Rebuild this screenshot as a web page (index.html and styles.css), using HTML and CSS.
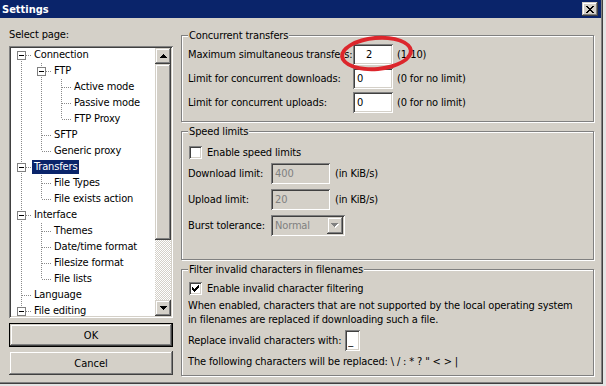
FILE: index.html
```html
<!DOCTYPE html>
<html lang="en">
  <head>
    <meta charset="UTF-8" />
    <meta name="viewport" content="width=device-width, initial-scale=1.0" />
    <title>Settings</title>
    <link rel="stylesheet" href="styles.css">
  </head>
  <body>
    <div class="window">
      <!-- Title bar -->
      <div class="titlebar">
        <span class="title">Settings</span>
        <button class="close raised" type="button" aria-label="Close">
          <svg width="8" height="7" viewBox="0 0 8 7"><path d="M0 0h2v1h1v1h2V1h1V0h2v1H7v1H6v1H5v1h1v1h1v1h1v1H6V6H5V5H3v1H2v1H0V6h1V5h1V4h1V3H2V2H1V1H0z" fill="#000"/></svg>
        </button>
      </div>

      <div class="content">
        <!-- Page list -->
        <div class="sidebar">
          <div class="caption">Select page:</div>
          <div class="tree sunken">
            <div class="tree-list">
              <div class="node"><span class="cell root-first"><span class="expander"></span></span><span class="label">Connection</span></div>
              <div class="node"><span class="cell pipe"></span><span class="cell tee"><span class="expander"></span></span><span class="label">FTP</span></div>
              <div class="node"><span class="cell pipe"></span><span class="cell pipe"></span><span class="cell tee"></span><span class="label">Active mode</span></div>
              <div class="node"><span class="cell pipe"></span><span class="cell pipe"></span><span class="cell tee"></span><span class="label">Passive mode</span></div>
              <div class="node"><span class="cell pipe"></span><span class="cell pipe"></span><span class="cell elbow"></span><span class="label">FTP Proxy</span></div>
              <div class="node"><span class="cell pipe"></span><span class="cell tee"></span><span class="label">SFTP</span></div>
              <div class="node"><span class="cell pipe"></span><span class="cell elbow"></span><span class="label">Generic proxy</span></div>
              <div class="node"><span class="cell tee"><span class="expander"></span></span><span class="label selected">Transfers</span></div>
              <div class="node"><span class="cell pipe"></span><span class="cell tee"></span><span class="label">File Types</span></div>
              <div class="node"><span class="cell pipe"></span><span class="cell elbow"></span><span class="label">File exists action</span></div>
              <div class="node"><span class="cell tee"><span class="expander"></span></span><span class="label">Interface</span></div>
              <div class="node"><span class="cell pipe"></span><span class="cell tee"></span><span class="label">Themes</span></div>
              <div class="node"><span class="cell pipe"></span><span class="cell tee"></span><span class="label">Date/time format</span></div>
              <div class="node"><span class="cell pipe"></span><span class="cell tee"></span><span class="label">Filesize format</span></div>
              <div class="node"><span class="cell pipe"></span><span class="cell elbow"></span><span class="label">File lists</span></div>
              <div class="node"><span class="cell tee"></span><span class="label">Language</span></div>
              <div class="node"><span class="cell tee"><span class="expander"></span></span><span class="label">File editing</span></div>
            </div>
            <div class="scrollbar">
              <div class="sb-btn raised">
                <svg width="7" height="4" viewBox="0 0 7 4"><path d="M3 0h1v1H3zM2 1h3v1H2zM1 2h5v1H1zM0 3h7v1H0z" fill="#000"/></svg>
              </div>
              <div class="sb-thumb raised"></div>
              <div class="sb-track"></div>
              <div class="sb-btn raised">
                <svg width="7" height="4" viewBox="0 0 7 4"><path d="M0 0h7v1H0zM1 1h5v1H1zM2 2h3v1H2zM3 3h1v1H3z" fill="#000"/></svg>
              </div>
            </div>
          </div>
          <button class="btn btn-default" type="button"><span class="raised">OK</span></button>
          <button class="btn raised" type="button">Cancel</button>
        </div>

        <!-- Transfers page -->
        <div class="pages">
          <fieldset class="group group-concurrent">
            <legend>Concurrent transfers</legend>
            <div class="form-grid">
              <span>Maximum simultaneous transfers:</span>
              <span class="marked">
                <input class="field sunken" type="text" value="2">
                <span class="ring"></span>
              </span>
              <span>(1-10)</span>

              <span>Limit for concurrent downloads:</span>
              <input class="field sunken" type="text" value="0">
              <span>(0 for no limit)</span>

              <span>Limit for concurrent uploads:</span>
              <input class="field sunken" type="text" value="0">
              <span>(0 for no limit)</span>
            </div>
          </fieldset>

          <fieldset class="group group-speed">
            <legend>Speed limits</legend>
            <label class="check-row">
              <span class="check sunken"></span>
              Enable speed limits
            </label>
            <div class="form-grid speed-grid">
              <span>Download limit:</span>
              <input class="field sunken" type="text" value="400" disabled>
              <span>(in KiB/s)</span>

              <span>Upload limit:</span>
              <input class="field sunken" type="text" value="20" disabled>
              <span>(in KiB/s)</span>

              <span>Burst tolerance:</span>
              <div class="combo sunken">
                <span class="combo-value">Normal</span>
                <span class="combo-btn raised">
                  <svg width="8" height="5" viewBox="0 0 8 5"><path d="M1 1h7v1H1zM2 2h5v1H2zM3 3h3v1H3zM4 4h1v1H4z" fill="#fff"/><path d="M0 0h7v1H0zM1 1h5v1H1zM2 2h3v1H2zM3 3h1v1H3z" fill="#808080"/></svg>
                </span>
              </div>
              <span></span>
            </div>
          </fieldset>

          <fieldset class="group group-filter">
            <legend>Filter invalid characters in filenames</legend>
            <label class="check-row">
              <span class="check sunken">
                <svg width="7" height="7" viewBox="0 0 7 7"><path d="M6 0h1v1H6zM5 1h2v1H5zM0 2h1v1H0zM4 2h3v1H4zM0 3h2v1H0zM3 3h3v1H3zM0 4h5v1H0zM1 5h3v1H1zM2 6h1v1H2z" fill="#000"/></svg>
              </span>
              Enable invalid character filtering
            </label>
            <p class="note">When enabled, characters that are not supported by the local operating system<br>in filenames are replaced if downloading such a file.</p>
            <div class="replace-row">
              <span>Replace invalid characters with:</span>
              <input class="field field-char sunken" type="text" value="_">
            </div>
            <p class="replaced">The following characters will be replaced: \ / : * ? " &lt; &gt; |</p>
          </fieldset>
        </div>
      </div>
    </div>
  </body>
</html>
```

FILE: styles.css
```css
:root {
  --face: #d4d0c8;
  --shadow: #808080;
  --dark: #404040;
  --light: #ffffff;
  --title: #0a246a;
  --dots-v: repeating-linear-gradient(to bottom, #8a8a8a 0 1px, transparent 1px 2px);
  --dots-h: repeating-linear-gradient(to right, #8a8a8a 0 1px, transparent 1px 2px);
}

* {
  margin: 0;
  padding: 0;
  box-sizing: border-box;
}

body {
  background-color: #e4e4e4;
  color: #000;
  font-family: "DejaVu Sans Condensed", "DejaVu Sans", sans-serif;
  font-size: 11px;
  letter-spacing: -0.15px;
}

/* 3D edges */
.raised {
  background-color: var(--face);
  box-shadow: inset -1px -1px 0 var(--dark), inset 1px 1px 0 var(--face),
    inset -2px -2px 0 var(--shadow), inset 2px 2px 0 var(--light);
}

.sunken {
  box-shadow: inset 1px 1px 0 var(--shadow), inset -1px -1px 0 var(--light),
    inset 2px 2px 0 var(--dark), inset -2px -2px 0 var(--face);
}

.window {
  width: 603px;
  height: 384px;
  display: flex;
  flex-direction: column;
  background-color: var(--face);
  box-shadow: inset -1px -1px 0 var(--dark), inset -2px -2px 0 var(--shadow);
}

.titlebar {
  height: 18px;
  margin-right: 2px;
  padding: 0 3px 0 2px;
  display: flex;
  align-items: center;
  justify-content: space-between;
  background-color: var(--title);
}

.title {
  color: #fff;
  font-weight: bold;
  font-size: 11px;
  letter-spacing: 0;
}

.close {
  width: 16px;
  height: 14px;
  border: none;
  display: flex;
  align-items: center;
  justify-content: center;
}

.content {
  flex: 1;
  display: flex;
  gap: 8px;
  padding: 9px 9px 0;
}

/* Page list */
.sidebar {
  width: 164px;
  display: flex;
  flex-direction: column;
}

.caption {
  line-height: 13px;
  padding-top: 1px;
  margin-bottom: 5px;
}

.tree {
  height: 272px;
  padding: 2px;
  display: flex;
  background-color: #fff;
  overflow: hidden;
}

.tree-list {
  flex: 1;
  margin-top: -1px;
  overflow: hidden;
}

.node {
  height: 16px;
  display: flex;
  align-items: center;
  white-space: nowrap;
}

.cell {
  width: 20px;
  height: 16px;
  flex: none;
  display: flex;
  align-items: center;
  justify-content: center;
  background-repeat: no-repeat;
}

.pipe {
  background-image: var(--dots-v);
  background-size: 1px 16px;
  background-position: 10px 0;
}

.tee {
  background-image: var(--dots-h), var(--dots-v);
  background-size: 9px 1px, 1px 16px;
  background-position: 11px 8px, 10px 0;
}

.elbow {
  background-image: var(--dots-h), var(--dots-v);
  background-size: 9px 1px, 1px 8px;
  background-position: 11px 8px, 10px 0;
}

.root-first {
  background-image: var(--dots-h), var(--dots-v);
  background-size: 9px 1px, 1px 8px;
  background-position: 11px 8px, 10px 8px;
}

.expander {
  width: 9px;
  height: 9px;
  margin-left: 1px;
  border: 1px solid var(--shadow);
  background: #fff linear-gradient(#000, #000) center / 5px 1px no-repeat;
}

.label {
  margin-left: 1px;
  padding: 0 2px;
  line-height: 14px;
}

.label.selected {
  background-color: var(--title);
  color: #fff;
}

.scrollbar {
  width: 16px;
  flex: none;
  display: flex;
  flex-direction: column;
  background-image: repeating-conic-gradient(#fff 0 25%, var(--face) 0 50%);
  background-size: 2px 2px;
}

.sb-btn {
  height: 16px;
  display: flex;
  align-items: center;
  justify-content: center;
}

.sb-thumb {
  height: 176px;
}

.sb-track {
  flex: 1;
}

.btn {
  height: 24px;
  margin-top: 4px;
  border: none;
  font: inherit;
  color: #000;
  display: flex;
  align-items: center;
  justify-content: center;
}

.btn-default {
  margin-top: 5px;
  border: 1px solid #000;
  background-color: var(--face);
}

.btn-default .raised {
  width: 100%;
  height: 100%;
  display: flex;
  align-items: center;
  justify-content: center;
}

/* Right side groups */
.pages {
  flex: 1;
  display: flex;
  flex-direction: column;
  gap: 3px;
  padding-top: 2px;
}

.group {
  margin: 0;
  padding: 2px 6px 8px;
  border: 1px solid var(--shadow);
  box-shadow: inset 1px 1px 0 var(--light), 1px 1px 0 var(--light);
  min-width: 0;
}

.group legend {
  padding: 0 1px;
  line-height: 13px;
  background-color: var(--face);
}

.form-grid {
  display: grid;
  grid-template-columns: 161px 40px auto;
  column-gap: 4px;
  row-gap: 3px;
  align-items: center;
  white-space: nowrap;
}

.field {
  width: 100%;
  height: 21px;
  padding: 0 4px;
  border: none;
  outline: none;
  background-color: #fff;
  font: inherit;
  color: #000;
}

.field:disabled {
  background-color: var(--face);
  color: var(--shadow);
}

.marked {
  position: relative;
  display: block;
}

.marked .field {
  padding-left: 13px;
}

.ring {
  position: absolute;
  left: -13px;
  top: -8px;
  width: 73px;
  height: 35px;
  border: 4px solid #dc262c;
  border-radius: 50%;
  transform: rotate(-5deg);
  pointer-events: none;
}

.check-row {
  height: 13px;
  margin-left: 1px;
  display: flex;
  align-items: center;
  gap: 5px;
}

.check {
  width: 13px;
  height: 13px;
  background-color: #fff;
  display: flex;
  align-items: center;
  justify-content: center;
}

.group-speed {
  padding-top: 8px;
  padding-bottom: 23px;
}

.speed-grid {
  margin-top: 4px;
  grid-template-columns: 78px 59px auto;
  column-gap: 5px;
  row-gap: 5px;
}

.combo {
  width: 74px;
  height: 21px;
  padding: 2px;
  display: flex;
  align-items: center;
  background-color: var(--face);
  color: var(--shadow);
}

.combo-value {
  flex: 1;
  padding-left: 2px;
}

.combo-btn {
  width: 16px;
  height: 17px;
  display: flex;
  align-items: center;
  justify-content: center;
}

.group-filter {
  padding-top: 6px;
  padding-bottom: 6px;
}

.note {
  margin-top: 4px;
  line-height: 14px;
}

.replace-row {
  margin-top: 3px;
  display: flex;
  align-items: center;
  gap: 4px;
}

.field-char {
  width: 15px;
  padding: 0 3px;
}

.replaced {
  margin-top: 4px;
  line-height: 14px;
}
```
